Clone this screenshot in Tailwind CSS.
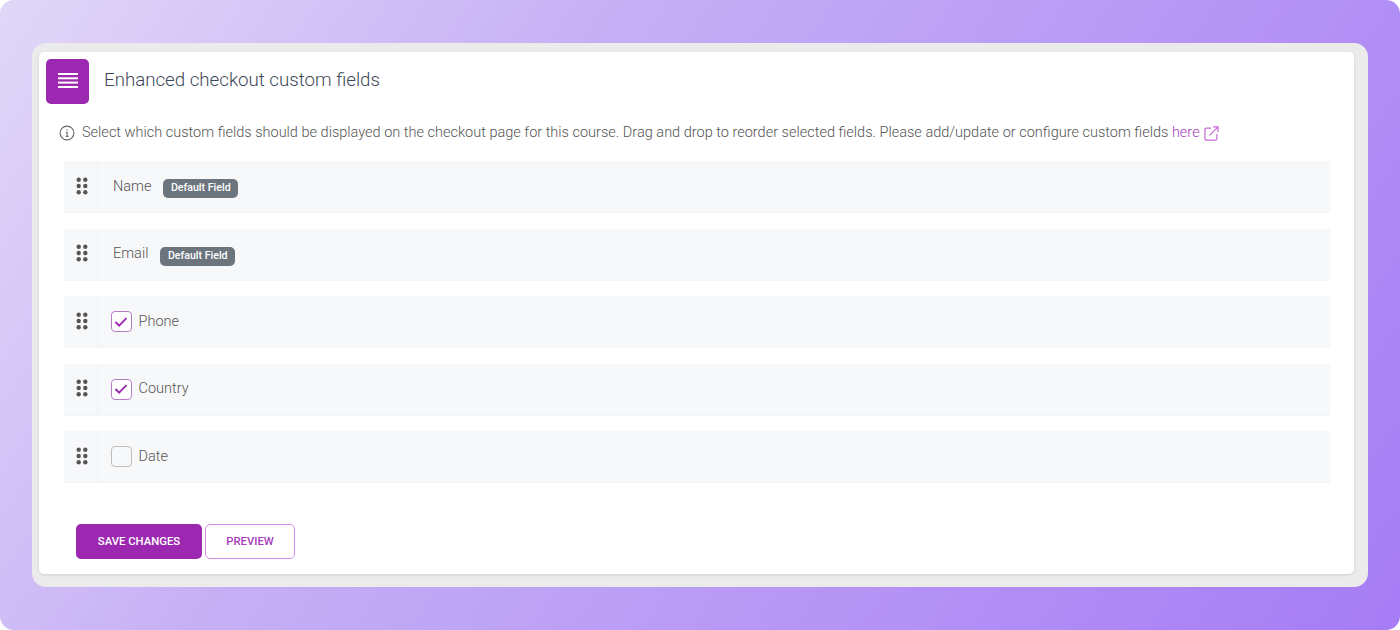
<!DOCTYPE html>
<html lang="en">
<head>
    <meta charset="UTF-8">
    <title>Enhanced checkout custom fields</title>
    <script src="https://cdn.jsdelivr.net/npm/@tailwindcss/browser@4"></script>
</head>
<body class="bg-white font-['Roboto',sans-serif]">
    <div class="w-[1400px] h-[630px] overflow-hidden rounded-[14px] bg-linear-[124deg] from-[#e1d7f8] via-[#c6b0f5] via-34% to-[#a67cf5] pt-[43px] pl-[32px]">
        <div class="w-[1336px] h-[544px] rounded-[14px] bg-[#ebebeb] pt-[9px] pl-[7px]">
            <!-- Card -->
            <div class="w-[1315px] h-[522px] rounded-[5px] bg-white shadow-[0_1px_3px_rgba(0,0,0,0.12)] pt-[7px] pl-[7px]">
                <!-- Header -->
                <div class="flex items-center h-[45px]">
                    <div class="w-[43px] h-[45px] rounded-[5px] bg-[#9c27b0] flex items-center justify-center pb-[2px]">
                        <svg width="20" height="15" viewBox="0 0 20 15" fill="#fff">
                            <rect x="0" y="0" width="20" height="2"/>
                            <rect x="0" y="4.3" width="20" height="2"/>
                            <rect x="0" y="8.6" width="20" height="2"/>
                            <rect x="0" y="13" width="20" height="2"/>
                        </svg>
                    </div>
                    <h4 class="ml-[15px] mb-[2px] text-[18.7px] font-light text-[#3c4858]">Enhanced checkout custom fields</h4>
                </div>

                <!-- Info line -->
                <div class="flex items-center h-[20px] mt-[19px] ml-[13px] text-[14.53px] font-light text-[#555]">
                    <svg class="mr-[7px]" width="16" height="16" viewBox="0 0 16 16" fill="none" stroke="#666" stroke-width="1.1">
                        <circle cx="8" cy="8" r="6.9"/>
                        <path d="M6.8 7.3H8.1V11.4M6.7 11.4H9.4" />
                        <circle cx="8" cy="4.9" r="0.7" fill="#666" stroke="none"/>
                    </svg>
                    <span>Select which custom fields should be displayed on the checkout page for this course. Drag and drop to reorder selected fields. Please add/update or configure custom fields <span class="text-[#a63bbb]">here</span></span>
                    <svg class="ml-[4px]" width="15" height="15" viewBox="0 0 16 16" fill="none" stroke="#c56bd6" stroke-width="1.3">
                        <path d="M7.5 2.3H2.4A1.4 1.4 0 0 0 1 3.7V13.6A1.4 1.4 0 0 0 2.4 15H12.3A1.4 1.4 0 0 0 13.7 13.6V8.5"/>
                        <path d="M6 10L15 1M9.6 1H15V6.4"/>
                    </svg>
                </div>

                <!-- Fields -->
                <div class="mt-[18.25px] ml-[18px] w-[1266px] flex flex-col gap-[15.5px]">
                    <div class="flex h-[52px] bg-[#f7f8fa] border-b border-[#f3f4f6]">
                        <div class="w-[34px] border-r border-[#f0f1f3] flex items-center justify-center pb-[2px] pl-[2px]">
                            <svg width="12" height="18" viewBox="0 0 12 18" fill="#555"><circle cx="2.7" cy="2.8" r="2.2"/><circle cx="9.3" cy="2.8" r="2.2"/><circle cx="2.7" cy="9" r="2.2"/><circle cx="9.3" cy="9" r="2.2"/><circle cx="2.7" cy="15.2" r="2.2"/><circle cx="9.3" cy="15.2" r="2.2"/></svg>
                        </div>
                        <div class="flex items-center pl-[15px] text-[14.5px] font-light text-[#555]">
                            <span>Name</span>
                            <span class="ml-[12px] mt-[4px] px-[7.5px] h-[19px] leading-[18px] rounded-[5px] bg-[#6c757d] text-white text-[10.6px] font-medium">Default Field</span>
                        </div>
                    </div>
                    <div class="flex h-[52px] bg-[#f7f8fa] border-b border-[#f3f4f6]">
                        <div class="w-[34px] border-r border-[#f0f1f3] flex items-center justify-center pb-[2px] pl-[2px]">
                            <svg width="12" height="18" viewBox="0 0 12 18" fill="#555"><circle cx="2.7" cy="2.8" r="2.2"/><circle cx="9.3" cy="2.8" r="2.2"/><circle cx="2.7" cy="9" r="2.2"/><circle cx="9.3" cy="9" r="2.2"/><circle cx="2.7" cy="15.2" r="2.2"/><circle cx="9.3" cy="15.2" r="2.2"/></svg>
                        </div>
                        <div class="flex items-center pl-[15px] text-[14.5px] font-light text-[#555]">
                            <span>Email</span>
                            <span class="ml-[12px] mt-[4px] px-[7.5px] h-[19px] leading-[18px] rounded-[5px] bg-[#6c757d] text-white text-[10.6px] font-medium">Default Field</span>
                        </div>
                    </div>
                    <div class="flex h-[52px] bg-[#f7f8fa] border-b border-[#f3f4f6]">
                        <div class="w-[34px] border-r border-[#f0f1f3] flex items-center justify-center pb-[2px] pl-[2px]">
                            <svg width="12" height="18" viewBox="0 0 12 18" fill="#555"><circle cx="2.7" cy="2.8" r="2.2"/><circle cx="9.3" cy="2.8" r="2.2"/><circle cx="2.7" cy="9" r="2.2"/><circle cx="9.3" cy="9" r="2.2"/><circle cx="2.7" cy="15.2" r="2.2"/><circle cx="9.3" cy="15.2" r="2.2"/></svg>
                        </div>
                        <div class="flex items-center pl-[12.5px] text-[14.5px] font-light text-[#555]">
                            <span class="w-[21px] h-[21px] rounded-[4px] border-[1.5px] border-[#b77cc4] bg-white flex items-center justify-center">
                                <svg width="14" height="10" viewBox="0 0 13 10" fill="none" stroke="#9c27b0" stroke-width="1.9"><path d="M1 5L4.6 8.6L12 1.2"/></svg>
                            </span>
                            <span class="ml-[7px]">Phone</span>
                        </div>
                    </div>
                    <div class="flex h-[52px] bg-[#f7f8fa] border-b border-[#f3f4f6]">
                        <div class="w-[34px] border-r border-[#f0f1f3] flex items-center justify-center pb-[2px] pl-[2px]">
                            <svg width="12" height="18" viewBox="0 0 12 18" fill="#555"><circle cx="2.7" cy="2.8" r="2.2"/><circle cx="9.3" cy="2.8" r="2.2"/><circle cx="2.7" cy="9" r="2.2"/><circle cx="9.3" cy="9" r="2.2"/><circle cx="2.7" cy="15.2" r="2.2"/><circle cx="9.3" cy="15.2" r="2.2"/></svg>
                        </div>
                        <div class="flex items-center pl-[12.5px] text-[14.5px] font-light text-[#555]">
                            <span class="w-[21px] h-[21px] rounded-[4px] border-[1.5px] border-[#b77cc4] bg-white flex items-center justify-center">
                                <svg width="14" height="10" viewBox="0 0 13 10" fill="none" stroke="#9c27b0" stroke-width="1.9"><path d="M1 5L4.6 8.6L12 1.2"/></svg>
                            </span>
                            <span class="ml-[7px]">Country</span>
                        </div>
                    </div>
                    <div class="flex h-[52px] bg-[#f7f8fa] border-b border-[#f3f4f6]">
                        <div class="w-[34px] border-r border-[#f0f1f3] flex items-center justify-center pb-[2px] pl-[2px]">
                            <svg width="12" height="18" viewBox="0 0 12 18" fill="#555"><circle cx="2.7" cy="2.8" r="2.2"/><circle cx="9.3" cy="2.8" r="2.2"/><circle cx="2.7" cy="9" r="2.2"/><circle cx="9.3" cy="9" r="2.2"/><circle cx="2.7" cy="15.2" r="2.2"/><circle cx="9.3" cy="15.2" r="2.2"/></svg>
                        </div>
                        <div class="flex items-center pl-[12.5px] text-[14.5px] font-light text-[#555]">
                            <span class="w-[21px] h-[21px] rounded-[4px] border-[1.5px] border-[#bdbdbd] bg-[#f7f8fa]"></span>
                            <span class="ml-[7px]">Date</span>
                        </div>
                    </div>
                </div>

                <!-- Actions -->
                <div class="flex mt-[40.75px] ml-[30px] gap-[3px]">
                    <button class="w-[126px] h-[35px] pt-[1px] rounded-[5px] bg-[#9c27b0] text-white text-[11.3px] font-medium">SAVE CHANGES</button>
                    <button class="w-[90px] h-[35px] pt-[1px] rounded-[5px] border border-[#d88ae8] bg-white text-[#a63bbb] text-[11.3px] font-medium">PREVIEW</button>
                </div>
            </div>
        </div>
    </div>
</body>
</html>
